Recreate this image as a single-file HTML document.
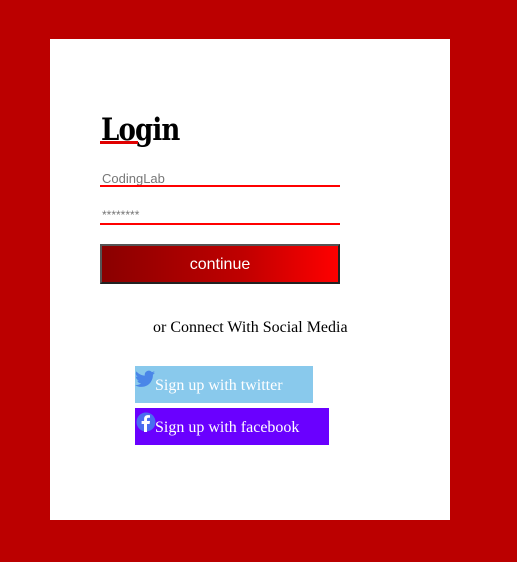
<!DOCTYPE html>
<html><head><style>
body{margin:0;width:517px;height:562px;background:#bb0000;position:relative;overflow:hidden;font-family:"Liberation Serif",serif}
.card{position:absolute;left:50px;top:39px;width:400px;height:481px;background:#fff}
.a{position:absolute}
</style></head><body>
<div class="card"></div>
<div class="a" style="left:101px;top:112px;font:bold 31px 'DejaVu Serif','Liberation Serif',serif;letter-spacing:-1px;color:#000;transform:scaleX(0.84);transform-origin:left">Login</div>
<div class="a" style="left:100px;top:141px;width:38px;height:3px;background:#e00000"></div>
<div class="a" style="left:102px;top:171px;font:13px 'Liberation Sans',sans-serif;color:#777">CodingLab</div>
<div class="a" style="left:100px;top:185px;width:240px;height:2px;background:#f00"></div>
<div class="a" style="left:102px;top:208px;font:12px 'Liberation Sans',sans-serif;color:#777">********</div>
<div class="a" style="left:100px;top:223px;width:240px;height:2px;background:#f00"></div>
<div class="a" style="left:100px;top:244px;width:236px;height:36px;border:2px solid #555;border-right-color:#222;border-bottom-color:#222;background:linear-gradient(90deg,#8a0000,#c00000 60%,#ff0000);color:#fff;font:16px 'Liberation Sans',sans-serif;text-align:center;line-height:38px">continue</div>
<div class="a" style="left:153px;top:319px;font:16px 'Liberation Serif',serif;color:#000">or Connect With Social Media</div>
<div class="a" style="left:135px;top:366px;width:178px;height:37px;background:#89c9ec"></div>
<svg class="a" style="left:135px;top:370px" width="20" height="18" viewBox="0 0 24 20"><path fill="#4a86e8" d="M24 2.4c-.9.4-1.8.6-2.8.8 1-.6 1.8-1.6 2.2-2.7-1 .6-2 1-3.1 1.2C19.3.7 18 0 16.6 0c-2.7 0-4.9 2.2-4.9 4.9 0 .4 0 .8.1 1.1C7.7 5.8 4.1 3.9 1.7.9c-.4.7-.7 1.6-.7 2.5 0 1.7.9 3.2 2.2 4.1-.8 0-1.6-.2-2.2-.6v.1c0 2.4 1.7 4.4 3.9 4.8-.4.1-.8.2-1.3.2-.3 0-.6 0-.9-.1.6 2 2.4 3.4 4.6 3.4-1.7 1.3-3.8 2.1-6.1 2.1-.4 0-.8 0-1.2-.1 2.2 1.4 4.8 2.2 7.5 2.2 9.1 0 14-7.5 14-14v-.6c1-.7 1.8-1.6 2.5-2.5z"/></svg>
<div class="a" style="left:155px;top:377px;font:16px 'Liberation Serif',serif;color:#fff">Sign up with twitter</div>
<div class="a" style="left:135px;top:408px;width:194px;height:37px;background:#6a00ff"></div>
<svg class="a" style="left:136px;top:412px" width="20" height="20" viewBox="0 0 20 20"><circle cx="10" cy="10" r="9.5" fill="#4a6cf0"/><path fill="#fff" d="M11 20v-8h2.6l.4-3H11V7.2c0-.9.3-1.4 1.5-1.4H14V3.2c-.3 0-1.2-.1-2.2-.1-2.2 0-3.7 1.3-3.7 3.8V9H5.6v3H8v8z"/></svg>
<div class="a" style="left:155px;top:419px;font:16px 'Liberation Serif',serif;color:#fff">Sign up with facebook</div>
</body></html>
